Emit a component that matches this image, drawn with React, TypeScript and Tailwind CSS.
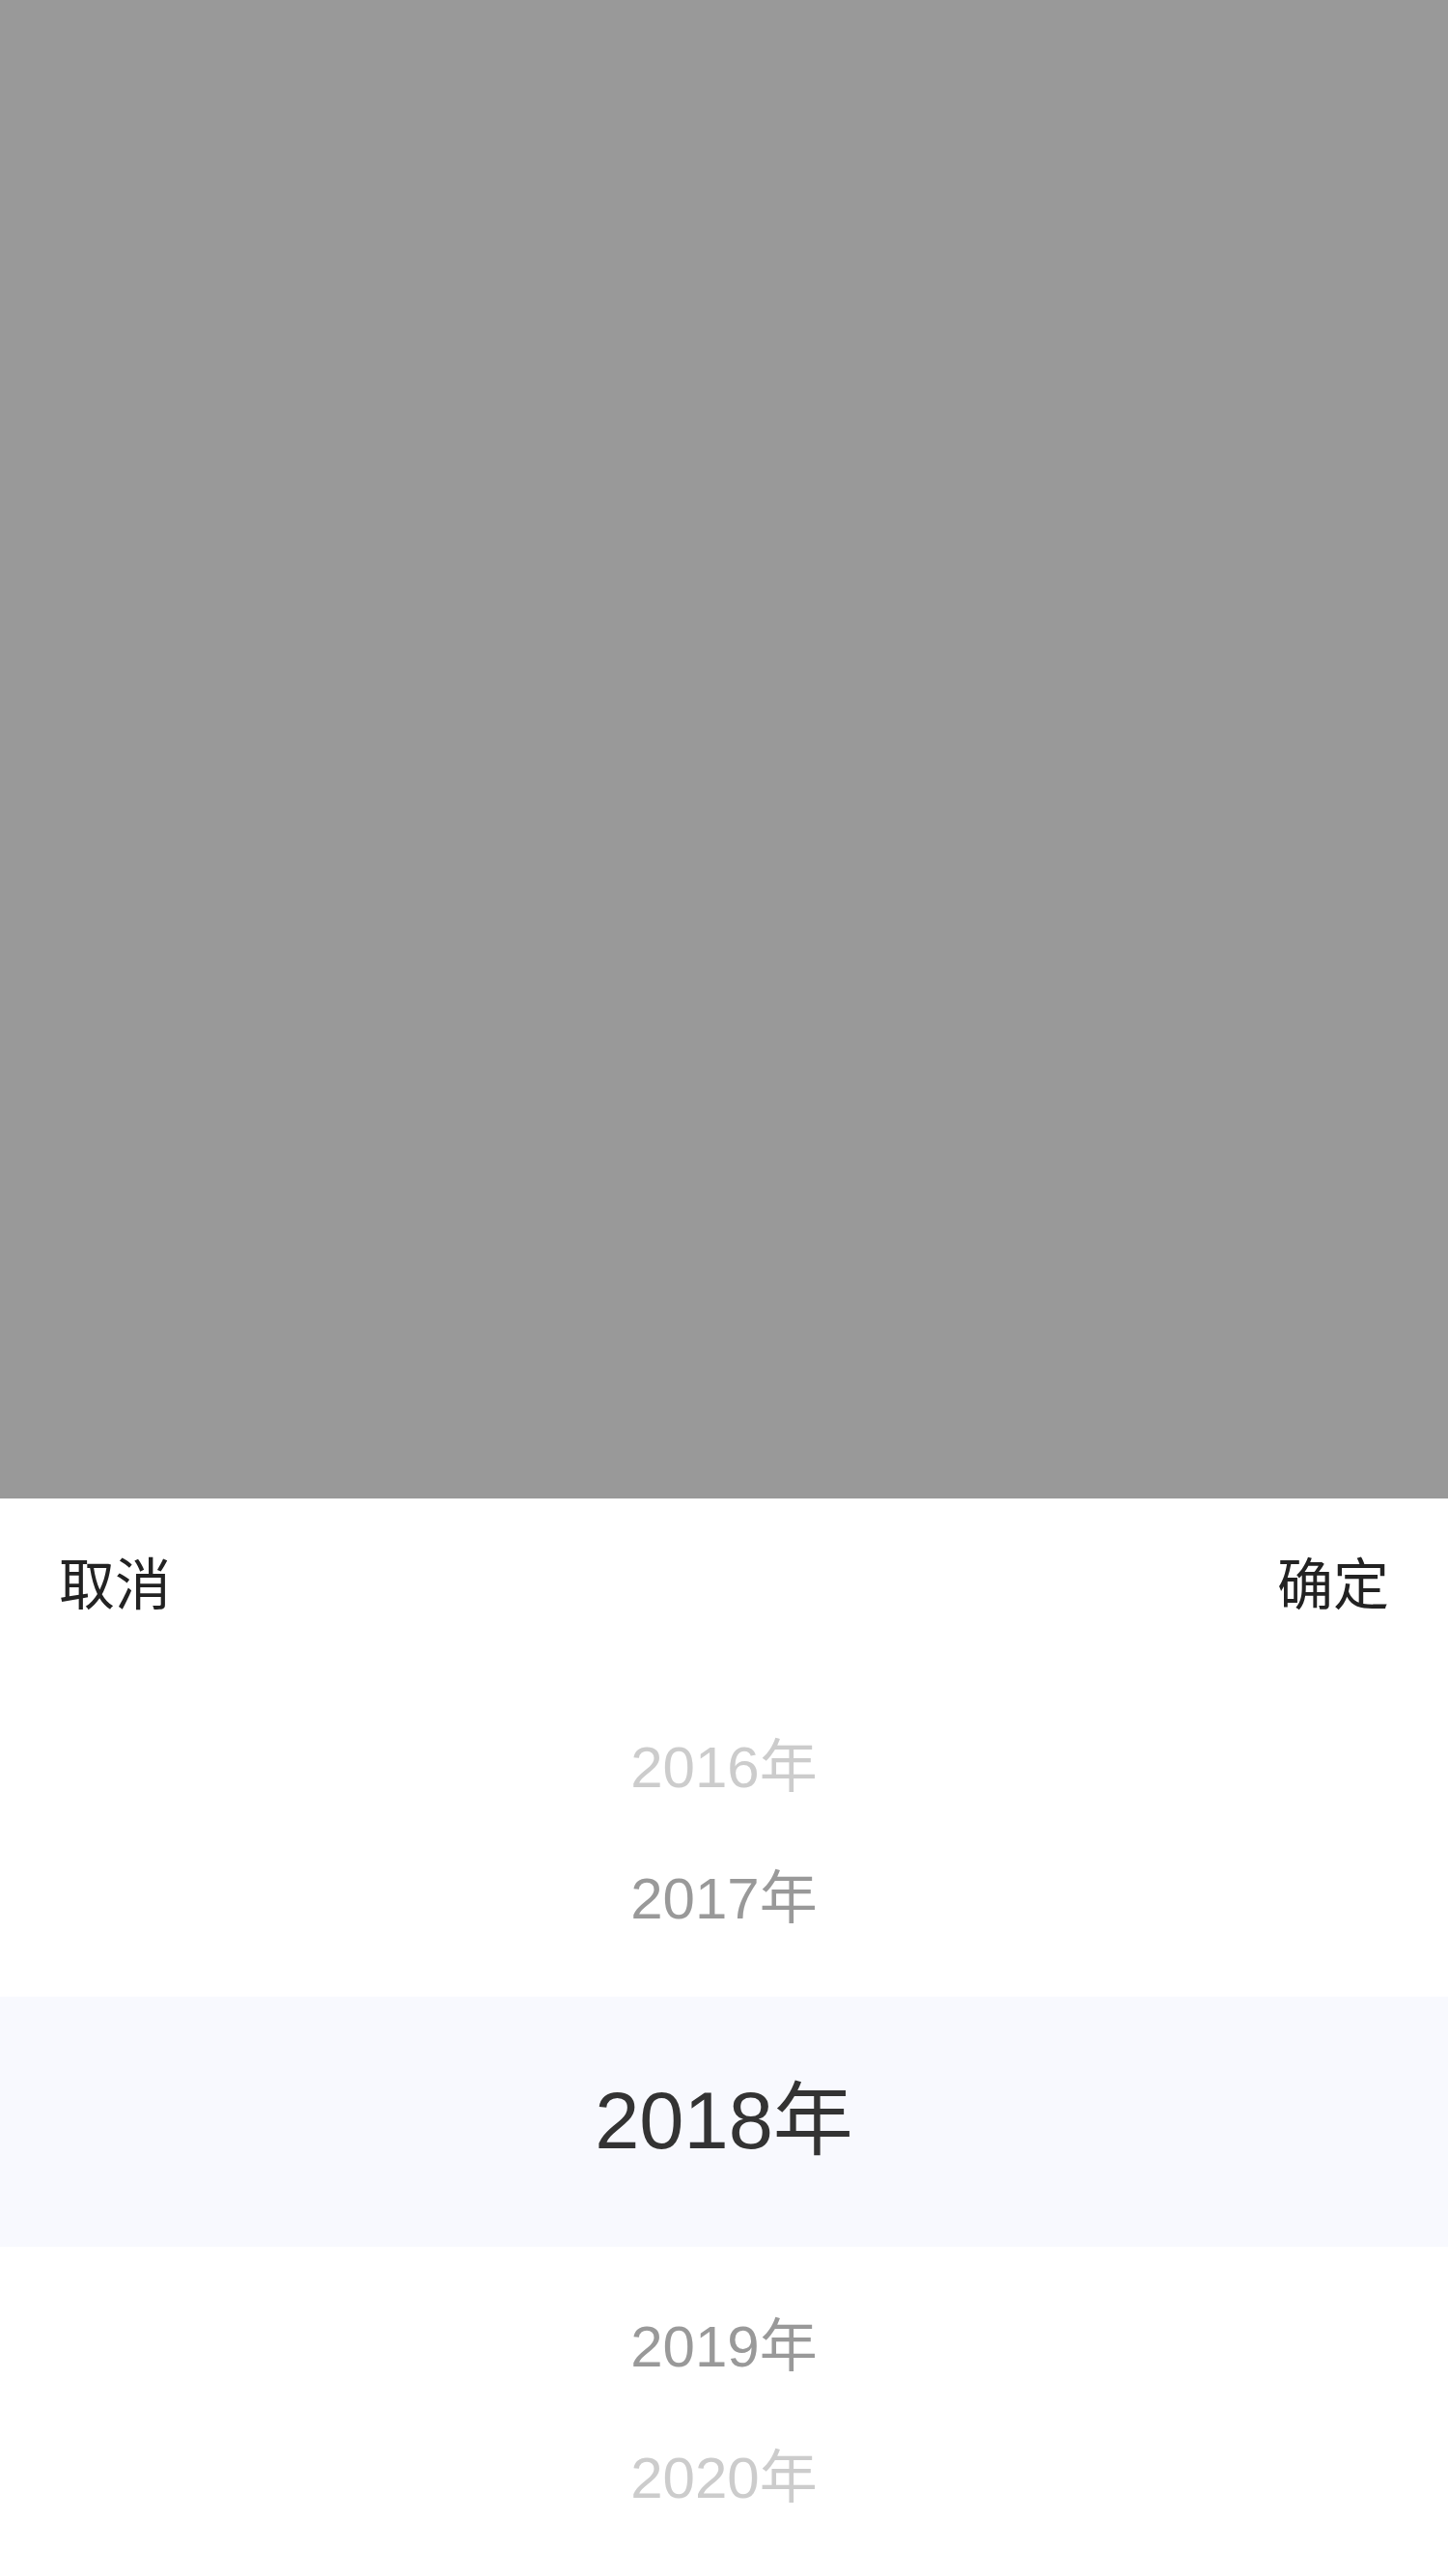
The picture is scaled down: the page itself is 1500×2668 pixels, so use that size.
import { FC } from 'react';

const years = [
  { label: '2016年', color: 'text-[#cccccc]' },
  { label: '2017年', color: 'text-[#999999]' },
];
const after = [
  { label: '2019年', color: 'text-[#999999]' },
  { label: '2020年', color: 'text-[#cccccc]' },
];

const font = { fontFamily: '"Liberation Sans", "Noto Sans CJK SC", sans-serif' };

const App: FC = () => {
  return (
    <div className="flex min-h-[2668px] w-full flex-col bg-white" style={font}>
      {/* mask */}
      <div className="h-[1552px] w-full bg-[#999999]" />

      {/* toolbar */}
      <div className="flex h-[178px] items-center justify-between px-[61px] text-[58px] text-[#222222]">
        <span>取消</span>
        <span>确定</span>
      </div>

      {/* column */}
      <div className="flex flex-col pt-[33px] pb-[33px]">
        {years.map((y) => (
          <div key={y.label} className={`flex h-[136px] items-center justify-center text-[60px] ${y.color}`}>
            {y.label}
          </div>
        ))}
        <div className="mt-[33px] mb-[36px] flex h-[259px] items-center justify-center bg-[#f8f9fe] text-[83px] text-[#333333]">
          2018年
        </div>
        {after.map((y) => (
          <div key={y.label} className={`flex h-[136px] items-center justify-center text-[60px] ${y.color}`}>
            {y.label}
          </div>
        ))}
      </div>
    </div>
  );
};

export default App;
